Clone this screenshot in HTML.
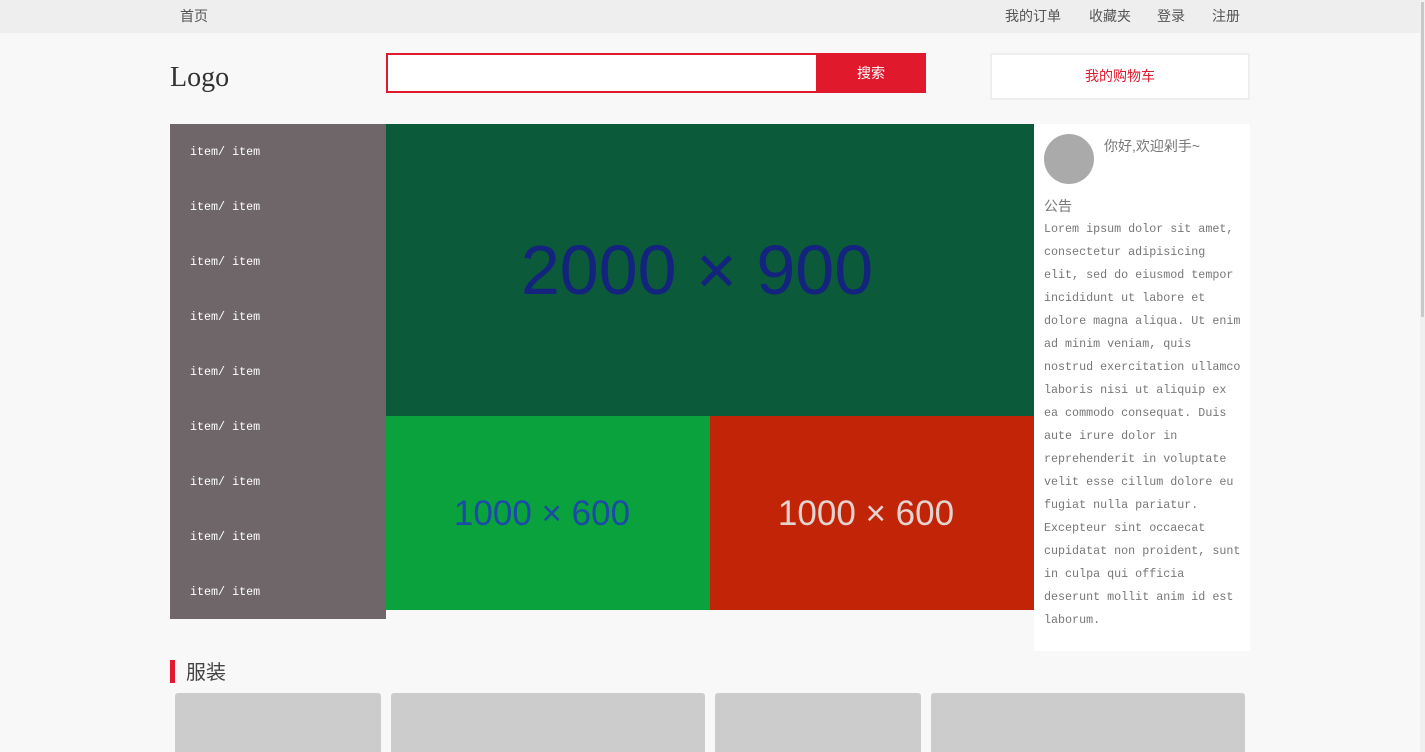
<!DOCTYPE html>
<html><head><meta charset="utf-8"><style>
*{margin:0;padding:0;box-sizing:border-box}
html,body{width:1425px;height:752px;overflow:hidden}
body{background:#f8f8f8;font-family:"Liberation Sans","Noto Sans CJK SC",sans-serif;position:relative}
.top{position:absolute;left:0;top:0;width:1425px;height:33px;background:#eeeeee;font-size:14px;color:#555}
.top span{position:absolute;top:6px}
.logo{position:absolute;left:170px;top:62px;font-family:"Liberation Serif",serif;font-size:28px;color:#333}
.search{position:absolute;left:386px;top:53px;width:540px;height:40px;border:2px solid #e0192d;background:#fff}
.btn{position:absolute;left:816px;top:53px;width:110px;height:40px;background:#e0192d;color:#fff;font-size:14px;text-align:center;line-height:40px}
.cart{position:absolute;left:990px;top:53px;width:260px;height:47px;border:2px solid #eee;background:#fff;color:#e0192d;font-size:14px;text-align:center;line-height:43px}
.menu{position:absolute;left:170px;top:124px;width:216px;height:495px;background:#6e6668}
.menu div{position:absolute;left:20px;font-family:"Liberation Mono",monospace;font-size:11.7px;color:#fff}
.big{position:absolute;left:386px;top:124px;width:648px;height:292px;background:#0b5a3a;color:#13237e;font-size:70px;text-align:center;line-height:292px;padding-right:26px}
.s1,.s2{position:absolute;top:416px;width:324px;height:194px;font-size:35px;text-align:center;line-height:196px}
.s1{left:386px;background:#09a23c;color:#1d4aa8;padding-right:12px}
.s2{left:710px;background:#c22407;color:#e4d4d0;padding-right:12px}
.side{position:absolute;left:1034px;top:124px;width:216px;height:527px;background:#fff}
.av{position:absolute;left:10px;top:10px;width:50px;height:50px;border-radius:50%;background:#aaa}
.hi{position:absolute;left:70px;top:12px;font-size:14px;color:#777}
.gg{position:absolute;left:10px;top:72px;font-size:14px;color:#777}
.lorem{position:absolute;left:10px;top:94px;width:204px;font-family:"Liberation Mono",monospace;font-size:11.7px;line-height:23px;color:#777}
.sec{position:absolute;left:170px;top:660px;width:5px;height:23px;background:#e0192d}
.sect{position:absolute;left:186px;top:656px;font-size:20px;color:#444}
.card{position:absolute;top:693px;height:70px;background:#ccc;border-radius:3px}
.sb{position:absolute;right:0;top:0;width:5px;height:752px;background:#f0f0f0}
.sb div{position:absolute;left:1px;top:2px;width:3px;height:315px;background:#c8c8c8}
</style></head><body>
<div class="top"><span style="left:180px">首页</span><span style="left:1005px">我的订单</span><span style="left:1089px">收藏夹</span><span style="left:1157px">登录</span><span style="left:1212px">注册</span></div>
<div class="logo">Logo</div>
<div class="search"></div><div class="btn">搜索</div>
<div class="cart">我的购物车</div>
<div class="menu">
<div style="top:21px">item/ item</div><div style="top:76px">item/ item</div><div style="top:131px">item/ item</div><div style="top:186px">item/ item</div><div style="top:241px">item/ item</div><div style="top:296px">item/ item</div><div style="top:351px">item/ item</div><div style="top:406px">item/ item</div><div style="top:461px">item/ item</div>
</div>
<div class="big">2000 × 900</div>
<div class="s1">1000 × 600</div><div class="s2">1000 × 600</div>
<div class="side"><div class="av"></div><div class="hi">你好,欢迎剁手~</div><div class="gg">公告</div>
<div class="lorem">Lorem ipsum dolor sit amet,<br>consectetur adipisicing<br>elit, sed do eiusmod tempor<br>incididunt ut labore et<br>dolore magna aliqua. Ut enim<br>ad minim veniam, quis<br>nostrud exercitation ullamco<br>laboris nisi ut aliquip ex<br>ea commodo consequat. Duis<br>aute irure dolor in<br>reprehenderit in voluptate<br>velit esse cillum dolore eu<br>fugiat nulla pariatur.<br>Excepteur sint occaecat<br>cupidatat non proident, sunt<br>in culpa qui officia<br>deserunt mollit anim id est<br>laborum.</div></div>
<div class="sec"></div><div class="sect">服装</div>
<div class="card" style="left:175px;width:206px"></div>
<div class="card" style="left:391px;width:314px"></div>
<div class="card" style="left:715px;width:206px"></div>
<div class="card" style="left:931px;width:314px"></div>
<div class="sb"><div></div></div>
</body></html>
